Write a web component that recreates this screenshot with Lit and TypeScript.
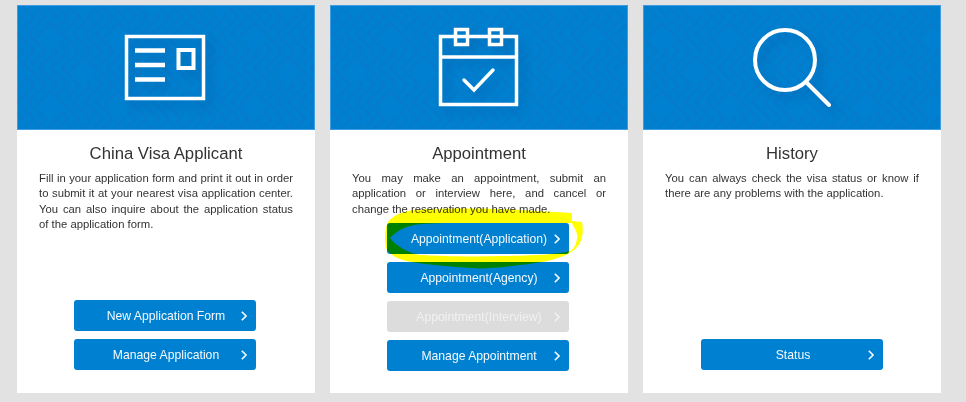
import { LitElement, css, html, svg } from "lit";
import { customElement } from "lit/decorators.js";

const icons = {
  card: svg`
    <rect x="126.5" y="36.5" width="77" height="62" />
    <path d="M135 50.5h30M135 65h30M135 79.5h30" stroke-width="4.5" />
    <rect x="178.5" y="50" width="15" height="18" stroke-width="4" />`,
  calendar: svg`
    <rect x="440.5" y="36.5" width="76" height="68" />
    <path d="M440 57h76" />
    <rect x="455.5" y="29.5" width="12" height="15" />
    <rect x="489.5" y="29.5" width="12" height="15" />
    <path d="M464 80l10 10 19-20" stroke-linecap="round" />`,
  search: svg`
    <circle cx="785" cy="60" r="30" stroke-width="4" />
    <path d="M807 83l22 22" stroke-width="4" stroke-linecap="round" />`,
};

const cards = [
  {
    title: "China Visa Applicant",
    text: "Fill in your application form and print it out in order to submit it at your nearest visa application center. You can also inquire about the application status of the application form.",
    icon: icons.card,
    left: 17,
    buttons: [{ label: "New Application Form" }, { label: "Manage Application" }],
  },
  {
    title: "Appointment",
    text: "You may make an appointment, submit an application or interview here, and cancel or change the reservation you have made.",
    icon: icons.calendar,
    left: 330,
    buttons: [
      { label: "Appointment(Application)" },
      { label: "Appointment(Agency)" },
      { label: "Appointment(Interview)", disabled: true },
      { label: "Manage Appointment" },
    ],
  },
  {
    title: "History",
    text: "You can always check the visa status or know if there are any problems with the application.",
    icon: icons.search,
    left: 643,
    buttons: [{ label: "Status" }],
  },
];

@customElement("app-root")
export class AppRoot extends LitElement {
  static styles = css`
    :host {
      display: block;
      position: relative;
      height: 402px;
      background: #e2e2e2;
      overflow: hidden;
      font-family: "Liberation Sans", Arial, sans-serif;
    }
    .cards {
      display: flex;
      gap: 15px;
      padding: 5px 0 0 17px;
    }
    .card {
      display: flex;
      flex-direction: column;
      width: 298px;
      height: 388px;
      background: #fff;
    }
    .banner {
      position: relative;
      box-sizing: border-box;
      height: 125px;
      flex: none;
      background: #0080d0;
      border: 1px solid #3d9de0;
      overflow: hidden;
    }
    .banner svg {
      position: absolute;
      left: -1px;
      top: -1px;
      width: 298px;
      height: 125px;
    }
    .glyph {
      fill: none;
      stroke: #fff;
      stroke-width: 3.5;
      filter: drop-shadow(6px 6px 5px rgba(0, 40, 90, 0.2));
    }
    .weave {
      fill: none;
      stroke: #067bcb;
      stroke-width: 3;
    }
    h2 {
      margin: 14px 0 0;
      font-size: 16.7px;
      font-weight: 400;
      line-height: 20px;
      color: #333;
      text-align: center;
    }
    p {
      margin: 7px 22px 0;
      font-size: 11.3px;
      line-height: 15.3px;
      color: #333;
      text-align: justify;
    }
    .actions {
      display: flex;
      flex-direction: column;
      align-items: center;
      gap: 8px;
      margin-top: auto;
      padding: 0 2px 23px 0;
    }
    .card:nth-child(2) .actions {
      padding-bottom: 22px;
    }
    .card:last-child .actions {
      padding-right: 0;
    }
    .btn {
      display: grid;
      grid-template-columns: 1fr auto 1fr;
      align-items: center;
      box-sizing: border-box;
      width: 182px;
      height: 31px;
      padding: 0 9px 0 11px;
      border-radius: 3px;
      background: #0080d0;
      color: #f4f9fd;
      font-size: 12.2px;
      white-space: nowrap;
    }
    .btn span {
      grid-column: 2;
    }
    .btn svg {
      grid-column: 3;
      justify-self: end;
      width: 6px;
      height: 10px;
      fill: none;
      stroke: currentColor;
      stroke-width: 1.6;
    }
    .btn.off {
      background: #dcdcdc;
      color: #f1f1f1;
    }
    .marker {
      position: absolute;
      left: 0;
      top: 0;
      width: 966px;
      height: 402px;
      mix-blend-mode: multiply;
      pointer-events: none;
    }
  `;

  renderBanner(card: (typeof cards)[number], i: number) {
    return html`
      <div class="banner">
        <svg viewBox="${card.left} 5 298 125">
          <defs>
            <pattern
              id="weave-${i}"
              width="48"
              height="48"
              patternUnits="userSpaceOnUse"
              patternTransform="rotate(45)"
            >
              <path
                class="weave"
                d="M0 4H20V24M0 12H12V24M0 20H4V24M28 0V20H48M36 0V12H48M44 0V4H48M24 28H44V48M24 36H36V48M24 44H28V48M4 48V28H24"
              />
            </pattern>
          </defs>
          <rect
            x=${card.left}
            y="5"
            width="298"
            height="125"
            fill="url(#weave-${i})"
          />
          <g class="glyph">${card.icon}</g>
        </svg>
      </div>
    `;
  }

  render() {
    return html`
      <div class="cards">
        ${cards.map(
          (card, i) => html`
            <section class="card">
              ${this.renderBanner(card, i)}
              <h2>${card.title}</h2>
              <p>${card.text}</p>
              <div class="actions">
                ${card.buttons.map(
                  (b) => html`
                    <div class="btn ${"disabled" in b ? "off" : ""}">
                      <span>${b.label}</span>
                      <svg viewBox="0 0 6 10"><path d="M0.8 0.8L5 5L0.8 9.2" /></svg>
                    </div>
                  `,
                )}
              </div>
            </section>
          `,
        )}
      </div>
      <svg class="marker" viewBox="0 0 966 402">
        <path
          fill="#ffff00"
          fill-rule="evenodd"
          d="M386 248C384 238 385 228 388 222C392 216 402 212 413 210C440 208 490 208 520 210L572 213L572 221L582 222C584 232 582 242 577 247C570 256 550 262 520 265C500 268 480 269 470 268C440 266 410 263 400 259C392 256 388 252 386 248Z
             M390 238C396 232 402 228 410 226C420 223 440 223 460 223L572 223L573 226C576 230 578 234 577 239C576 245 573 250 570 251C560 254 530 256 500 256C470 257 440 256 420 255C408 253 396 246 390 238Z"
        />
      </svg>
    `;
  }
}
